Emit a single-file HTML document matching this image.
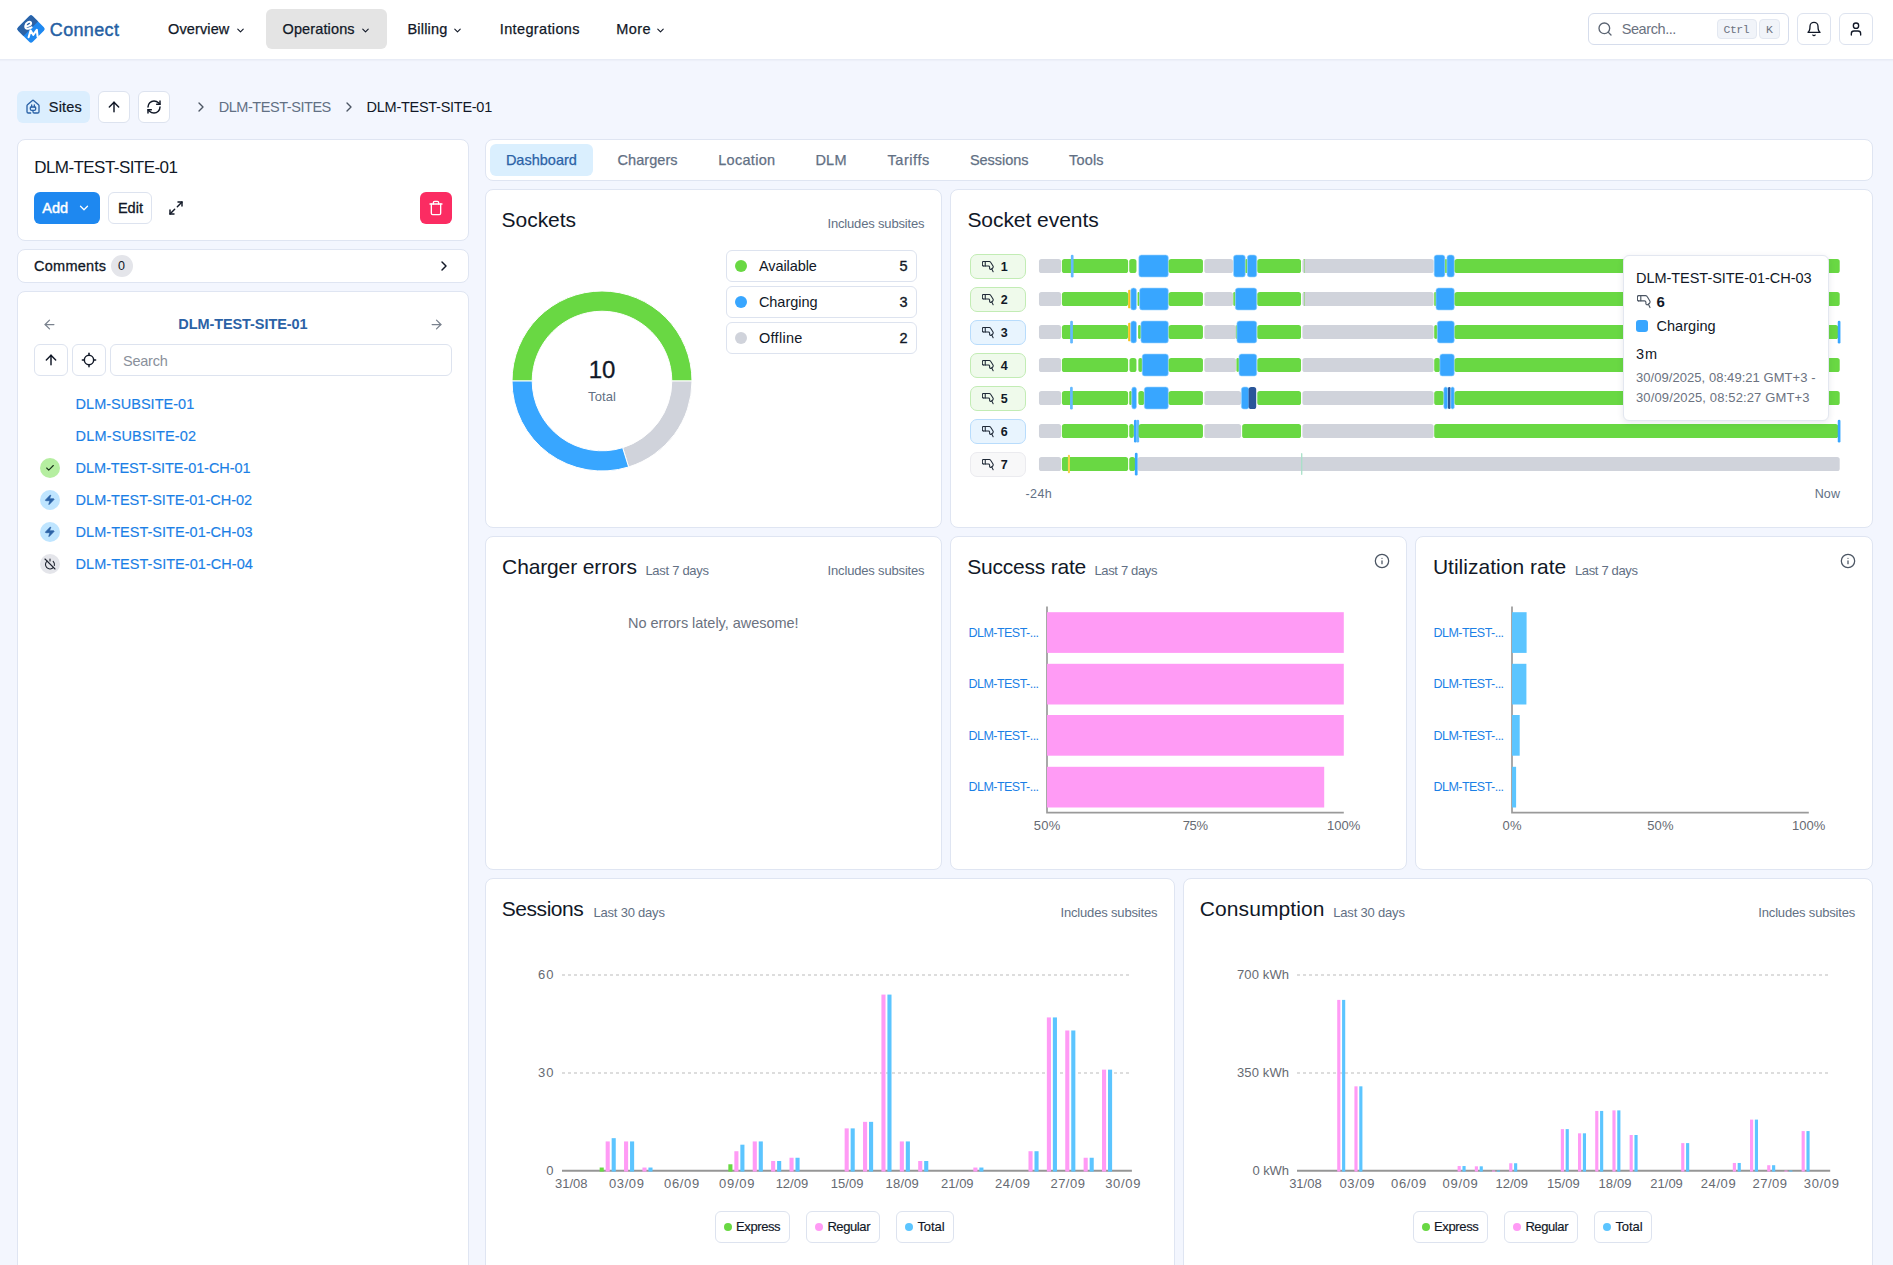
<!DOCTYPE html>
<html><head><meta charset="utf-8"><title>Connect</title><style>
html,body{margin:0;padding:0;}
body{width:1893px;height:1265px;overflow:hidden;background:#f3f6fe;position:relative;font-family:"Liberation Sans",sans-serif;}
.b{position:absolute;box-sizing:border-box;display:block;}
.t{position:absolute;white-space:nowrap;line-height:1;display:block;}
</style></head><body>
<div class="b" style="left:-10px;top:0px;width:1913px;height:59px;background:#fff;box-shadow:0 1px 2px rgba(30,40,80,.075);"></div>
<svg class="b" style="left:16px;top:14px" width="30" height="30" viewBox="0 0 30 30"><defs><clipPath id="lg"><rect x="4.6" y="4.6" width="20.8" height="20.8" rx="2.6" transform="rotate(45 15 15)"/></clipPath></defs><g clip-path="url(#lg)"><rect x="0" y="0" width="30" height="30" fill="#1e88f0"/><polygon points="-5,-5 30,-5 -5,30" fill="#2b62a6" transform="translate(2.2,2.2)"/></g><path d="M9.2 12.4C12 12.6 15.8 10.8 15 8.6C14.2 6.8 9.8 8.2 9.3 12C9 15 12.3 15.6 15.6 13.4" fill="none" stroke="#fff" stroke-width="2" stroke-linecap="round"/><path d="M12.6 23.2L14.6 16.6L17.2 20.8L20.8 15.8L21.6 22.6" fill="none" stroke="#fff" stroke-width="2.1" stroke-linecap="round" stroke-linejoin="round"/></svg>
<span class="t" style="left:49.80px;top:21px;font-size:18px;line-height:18px;color:#265fa3;letter-spacing:0.343px;-webkit-text-stroke:0.42px #265fa3;">Connect</span>
<div class="b" style="left:266px;top:9px;width:121px;height:40px;background:#e4e4e4;border-radius:6px;"></div>
<span class="t" style="left:168.00px;top:22px;font-size:14.5px;line-height:14.5px;color:#111827;letter-spacing:0.124px;-webkit-text-stroke:0.25px #111827;">Overview</span>
<svg class="b" style="left:234.60px;top:24.50px;" width="11" height="11" viewBox="0 0 24 24" fill="none" stroke="#111827" stroke-width="2.4" stroke-linecap="round" stroke-linejoin="round"><path d="m6 9 6 6 6-6"/></svg>
<span class="t" style="left:282.50px;top:22px;font-size:14.5px;line-height:14.5px;color:#111827;letter-spacing:0.130px;-webkit-text-stroke:0.25px #111827;">Operations</span>
<svg class="b" style="left:359.50px;top:24.50px;" width="11" height="11" viewBox="0 0 24 24" fill="none" stroke="#111827" stroke-width="2.4" stroke-linecap="round" stroke-linejoin="round"><path d="m6 9 6 6 6-6"/></svg>
<span class="t" style="left:407.50px;top:22px;font-size:14.5px;line-height:14.5px;color:#111827;letter-spacing:0.186px;-webkit-text-stroke:0.25px #111827;">Billing</span>
<svg class="b" style="left:452.00px;top:24.50px;" width="11" height="11" viewBox="0 0 24 24" fill="none" stroke="#111827" stroke-width="2.4" stroke-linecap="round" stroke-linejoin="round"><path d="m6 9 6 6 6-6"/></svg>
<span class="t" style="left:499.80px;top:22px;font-size:14.5px;line-height:14.5px;color:#111827;letter-spacing:0.357px;-webkit-text-stroke:0.25px #111827;">Integrations</span>
<span class="t" style="left:616.30px;top:22px;font-size:14.5px;line-height:14.5px;color:#111827;letter-spacing:0.388px;-webkit-text-stroke:0.25px #111827;">More</span>
<svg class="b" style="left:654.80px;top:24.50px;" width="11" height="11" viewBox="0 0 24 24" fill="none" stroke="#111827" stroke-width="2.4" stroke-linecap="round" stroke-linejoin="round"><path d="m6 9 6 6 6-6"/></svg>
<div class="b" style="left:1588px;top:13px;width:201px;height:32px;background:#fff;border:1px solid #d6ddec;border-radius:6px;box-sizing:border-box;"></div>
<svg class="b" style="left:1597.00px;top:21.00px;" width="16" height="16" viewBox="0 0 24 24" fill="none" stroke="#5b6472" stroke-width="2" stroke-linecap="round" stroke-linejoin="round"><circle cx="11" cy="11" r="8"/><path d="m21 21-4.3-4.3"/></svg>
<span class="t" style="left:1621.70px;top:22px;font-size:14.5px;line-height:14.5px;color:#6b7280;letter-spacing:-0.416px;">Search...</span>
<div class="b" style="left:1717px;top:19px;width:40px;height:20px;background:#f1f4f9;border:1px solid #e3e8f1;border-radius:4px;box-sizing:border-box;"></div>
<span class="t" style="left:1723.50px;top:24px;font-size:11.5px;line-height:11.5px;color:#6b7280;letter-spacing:-0.468px;font-family:Liberation Mono,monospace;">Ctrl</span>
<div class="b" style="left:1759px;top:19px;width:21px;height:20px;background:#f1f4f9;border:1px solid #e3e8f1;border-radius:4px;box-sizing:border-box;"></div>
<span class="t" style="left:1766.05px;top:24px;font-size:11.5px;line-height:11.5px;color:#6b7280;font-family:Liberation Mono,monospace;">K</span>
<div class="b" style="left:1797px;top:13px;width:33.5px;height:32px;background:#fff;border:1px solid #dde3ef;border-radius:6px;box-sizing:border-box;"></div>
<svg class="b" style="left:1805.80px;top:21.00px;" width="16" height="16" viewBox="0 0 24 24" fill="none" stroke="#111827" stroke-width="2" stroke-linecap="round" stroke-linejoin="round"><path d="M6 8a6 6 0 0 1 12 0c0 7 3 9 3 9H3s3-2 3-9"/><path d="M10.3 21a1.94 1.94 0 0 0 3.4 0"/></svg>
<div class="b" style="left:1839px;top:13px;width:33.5px;height:32px;background:#fff;border:1px solid #dde3ef;border-radius:6px;box-sizing:border-box;"></div>
<svg class="b" style="left:1847.80px;top:21.00px;" width="16" height="16" viewBox="0 0 24 24" fill="none" stroke="#111827" stroke-width="2" stroke-linecap="round" stroke-linejoin="round"><path d="M19 21v-2a4 4 0 0 0-4-4H9a4 4 0 0 0-4 4v2"/><circle cx="12" cy="7" r="4"/></svg>
<div class="b" style="left:17px;top:91px;width:73px;height:32px;background:#dbeefe;border-radius:6px;"></div>
<svg class="b" style="left:25.00px;top:98.60px;" width="16" height="16" viewBox="0 0 24 24" fill="none" stroke="#2b62a6" stroke-width="2" stroke-linecap="round" stroke-linejoin="round"><path d="M10 12V8.964"/><path d="M14 12V8.964"/><path d="M15 12a1 1 0 0 1 1 1v2a2 2 0 0 1-2 2h-4a2 2 0 0 1-2-2v-2a1 1 0 0 1 1-1z"/><path d="M8.5 21H5a2 2 0 0 1-2-2v-9a2 2 0 0 1 .709-1.528l7-5.999a2 2 0 0 1 2.582 0l7 5.999A2 2 0 0 1 21 10v9a2 2 0 0 1-2 2h-5a2 2 0 0 1-2-2v-2"/></svg>
<span class="t" style="left:48.80px;top:100px;font-size:14.5px;line-height:14.5px;color:#111827;letter-spacing:0.191px;-webkit-text-stroke:0.2px #111827;">Sites</span>
<div class="b" style="left:98px;top:91px;width:32px;height:32px;background:#fff;border:1px solid #dde3ef;border-radius:6px;box-sizing:border-box;"></div>
<svg class="b" style="left:106.00px;top:99.00px;" width="16" height="16" viewBox="0 0 24 24" fill="none" stroke="#111827" stroke-width="2.2" stroke-linecap="round" stroke-linejoin="round"><path d="m5 12 7-7 7 7"/><path d="M12 19V5"/></svg>
<div class="b" style="left:138px;top:91px;width:32px;height:32px;background:#fff;border:1px solid #dde3ef;border-radius:6px;box-sizing:border-box;"></div>
<svg class="b" style="left:146.00px;top:99.00px;" width="16" height="16" viewBox="0 0 24 24" fill="none" stroke="#111827" stroke-width="2.2" stroke-linecap="round" stroke-linejoin="round"><path d="M3 12a9 9 0 0 1 9-9 9.75 9.75 0 0 1 6.74 2.74L21 8"/><path d="M21 3v5h-5"/><path d="M21 12a9 9 0 0 1-9 9 9.75 9.75 0 0 1-6.74-2.74L3 16"/><path d="M8 16H3v5"/></svg>
<svg class="b" style="left:193.00px;top:98.80px;" width="16" height="16" viewBox="0 0 24 24" fill="none" stroke="#4b5563" stroke-width="2" stroke-linecap="round" stroke-linejoin="round"><path d="m9 18 6-6-6-6"/></svg>
<span class="t" style="left:218.70px;top:100px;font-size:14.5px;line-height:14.5px;color:#627084;letter-spacing:-0.448px;">DLM-TEST-SITES</span>
<svg class="b" style="left:340.80px;top:98.80px;" width="16" height="16" viewBox="0 0 24 24" fill="none" stroke="#4b5563" stroke-width="2" stroke-linecap="round" stroke-linejoin="round"><path d="m9 18 6-6-6-6"/></svg>
<span class="t" style="left:366.60px;top:100px;font-size:14.5px;line-height:14.5px;color:#111827;letter-spacing:-0.274px;">DLM-TEST-SITE-01</span>
<div class="b" style="left:17px;top:139px;width:452px;height:102px;background:#fff;border:1px solid #dfe5f2;border-radius:8px;box-sizing:border-box;"></div>
<span class="t" style="left:34.20px;top:159px;font-size:17px;line-height:17px;color:#111827;letter-spacing:-0.559px;">DLM-TEST-SITE-01</span>
<div class="b" style="left:34px;top:192px;width:66px;height:32px;background:#1e88f0;border-radius:6px;"></div>
<span class="t" style="left:42.20px;top:201px;font-size:14.5px;line-height:14.5px;color:#fff;letter-spacing:0.100px;-webkit-text-stroke:0.45px #fff;">Add</span>
<svg class="b" style="left:77.00px;top:201.00px;" width="14" height="14" viewBox="0 0 24 24" fill="none" stroke="#fff" stroke-width="2.2" stroke-linecap="round" stroke-linejoin="round"><path d="m6 9 6 6 6-6"/></svg>
<div class="b" style="left:108px;top:192px;width:44px;height:32px;background:#fff;border:1px solid #dde3ef;border-radius:6px;box-sizing:border-box;"></div>
<span class="t" style="left:117.90px;top:201px;font-size:14.5px;line-height:14.5px;color:#111827;letter-spacing:0.038px;-webkit-text-stroke:0.3px #111827;">Edit</span>
<svg class="b" style="left:168.00px;top:200.00px;" width="16" height="16" viewBox="0 0 24 24" fill="none" stroke="#111827" stroke-width="2.2" stroke-linecap="round" stroke-linejoin="round"><polyline points="15 3 21 3 21 9"/><polyline points="9 21 3 21 3 15"/><line x1="21" x2="14" y1="3" y2="10"/><line x1="3" x2="10" y1="21" y2="14"/></svg>
<div class="b" style="left:420px;top:192px;width:32px;height:32px;background:#fb2c62;border-radius:6px;"></div>
<svg class="b" style="left:428.00px;top:200.00px;" width="16" height="16" viewBox="0 0 24 24" fill="none" stroke="#fff" stroke-width="2" stroke-linecap="round" stroke-linejoin="round"><path d="M3 6h18"/><path d="M19 6v14c0 1-1 2-2 2H7c-1 0-2-1-2-2V6"/><path d="M8 6V4c0-1 1-2 2-2h4c1 0 2 1 2 2v2"/></svg>
<div class="b" style="left:17px;top:249px;width:452px;height:34px;background:#fff;border:1px solid #dfe5f2;border-radius:8px;box-sizing:border-box;"></div>
<span class="t" style="left:34.00px;top:259px;font-size:14.5px;line-height:14.5px;color:#111827;letter-spacing:0.271px;-webkit-text-stroke:0.3px #111827;">Comments</span>
<div class="b" style="left:110.5px;top:255px;width:22px;height:22px;background:#e4e5ea;border-radius:11px;"></div>
<span class="t" style="left:118.02px;top:260px;font-size:12.5px;line-height:12.5px;color:#111827;">0</span>
<svg class="b" style="left:436.00px;top:258.00px;" width="16" height="16" viewBox="0 0 24 24" fill="none" stroke="#111827" stroke-width="2.2" stroke-linecap="round" stroke-linejoin="round"><path d="m9 18 6-6-6-6"/></svg>
<div class="b" style="left:17px;top:291px;width:452px;height:1000px;background:#fff;border:1px solid #dfe5f2;border-radius:8px;box-sizing:border-box;"></div>
<svg class="b" style="left:42.30px;top:316.50px;" width="15" height="15" viewBox="0 0 24 24" fill="none" stroke="#7a828e" stroke-width="2" stroke-linecap="round" stroke-linejoin="round"><path d="m12 19-7-7 7-7"/><path d="M19 12H5"/></svg>
<span class="t" style="left:178.25px;top:317px;font-size:14.5px;line-height:14.5px;color:#2b62a6;font-weight:700;letter-spacing:-0.081px;">DLM-TEST-SITE-01</span>
<svg class="b" style="left:428.50px;top:316.50px;" width="15" height="15" viewBox="0 0 24 24" fill="none" stroke="#7a828e" stroke-width="2" stroke-linecap="round" stroke-linejoin="round"><path d="M5 12h14"/><path d="m12 5 7 7-7 7"/></svg>
<div class="b" style="left:34px;top:344px;width:34px;height:32px;background:#fff;border:1px solid #dde3ef;border-radius:6px;box-sizing:border-box;"></div>
<svg class="b" style="left:43.00px;top:352.00px;" width="16" height="16" viewBox="0 0 24 24" fill="none" stroke="#111827" stroke-width="2.2" stroke-linecap="round" stroke-linejoin="round"><path d="m5 12 7-7 7 7"/><path d="M12 19V5"/></svg>
<div class="b" style="left:72px;top:344px;width:34px;height:32px;background:#fff;border:1px solid #dde3ef;border-radius:6px;box-sizing:border-box;"></div>
<svg class="b" style="left:81.00px;top:352.00px;" width="16" height="16" viewBox="0 0 24 24" fill="none" stroke="#111827" stroke-width="2.2" stroke-linecap="round" stroke-linejoin="round"><line x1="2" x2="5" y1="12" y2="12"/><line x1="19" x2="22" y1="12" y2="12"/><line x1="12" x2="12" y1="2" y2="5"/><line x1="12" x2="12" y1="19" y2="22"/><circle cx="12" cy="12" r="7"/></svg>
<div class="b" style="left:110px;top:344px;width:342px;height:32px;background:#fff;border:1px solid #dde3ef;border-radius:6px;box-sizing:border-box;"></div>
<span class="t" style="left:123.00px;top:354px;font-size:14.5px;line-height:14.5px;color:#8a909b;letter-spacing:-0.229px;">Search</span>
<span class="t" style="left:75.60px;top:397px;font-size:14.5px;line-height:14.5px;color:#1b7fe6;letter-spacing:0.012px;-webkit-text-stroke:0.15px #1b7fe6;">DLM-SUBSITE-01</span>
<span class="t" style="left:75.60px;top:429px;font-size:14.5px;line-height:14.5px;color:#1b7fe6;letter-spacing:0.150px;-webkit-text-stroke:0.15px #1b7fe6;">DLM-SUBSITE-02</span>
<span class="t" style="left:75.60px;top:461px;font-size:14.5px;line-height:14.5px;color:#1b7fe6;letter-spacing:-0.074px;-webkit-text-stroke:0.15px #1b7fe6;">DLM-TEST-SITE-01-CH-01</span>
<div class="b" style="left:40px;top:458px;width:20px;height:20px;background:#b5eea0;border-radius:10px;"></div>
<svg class="b" style="left:45.00px;top:463.30px;" width="10" height="10" viewBox="0 0 24 24" fill="none" stroke="#17301a" stroke-width="2.6" stroke-linecap="round" stroke-linejoin="round"><path d="M20 6 9 17l-5-5"/></svg>
<span class="t" style="left:75.60px;top:493px;font-size:14.5px;line-height:14.5px;color:#1b7fe6;letter-spacing:0.007px;-webkit-text-stroke:0.15px #1b7fe6;">DLM-TEST-SITE-01-CH-02</span>
<div class="b" style="left:40px;top:490px;width:20px;height:20px;background:#bfe5ff;border-radius:10px;"></div>
<svg class="b" style="left:44.25px;top:494.25px;" width="11.5" height="11.5" viewBox="0 0 24 24" fill="#2b62a6" stroke="#2b62a6" stroke-width="1.5" stroke-linecap="round" stroke-linejoin="round"><path d="M4 14a1 1 0 0 1-.78-1.63l9.9-10.2a.5.5 0 0 1 .86.46l-1.92 6.02A1 1 0 0 0 13 10h7a1 1 0 0 1 .78 1.63l-9.9 10.2a.5.5 0 0 1-.86-.46l1.92-6.02A1 1 0 0 0 11 14z"/></svg>
<span class="t" style="left:75.60px;top:525px;font-size:14.5px;line-height:14.5px;color:#1b7fe6;letter-spacing:0.026px;-webkit-text-stroke:0.15px #1b7fe6;">DLM-TEST-SITE-01-CH-03</span>
<div class="b" style="left:40px;top:522px;width:20px;height:20px;background:#bfe5ff;border-radius:10px;"></div>
<svg class="b" style="left:44.25px;top:526.25px;" width="11.5" height="11.5" viewBox="0 0 24 24" fill="#2b62a6" stroke="#2b62a6" stroke-width="1.5" stroke-linecap="round" stroke-linejoin="round"><path d="M4 14a1 1 0 0 1-.78-1.63l9.9-10.2a.5.5 0 0 1 .86.46l-1.92 6.02A1 1 0 0 0 13 10h7a1 1 0 0 1 .78 1.63l-9.9 10.2a.5.5 0 0 1-.86-.46l1.92-6.02A1 1 0 0 0 11 14z"/></svg>
<span class="t" style="left:75.60px;top:557px;font-size:14.5px;line-height:14.5px;color:#1b7fe6;letter-spacing:0.036px;-webkit-text-stroke:0.15px #1b7fe6;">DLM-TEST-SITE-01-CH-04</span>
<div class="b" style="left:40px;top:554px;width:20px;height:20px;background:#e4e5ea;border-radius:10px;"></div>
<svg class="b" style="left:44.00px;top:558.00px;" width="12" height="12" viewBox="0 0 24 24" fill="none" stroke="#1f2430" stroke-width="2.2" stroke-linecap="round" stroke-linejoin="round"><path d="M18.36 6.64A9 9 0 0 1 20.77 15"/><path d="M6.16 6.16a9 9 0 1 0 12.68 12.68"/><path d="M12 2v4"/><path d="m2 2 20 20"/></svg>
<div class="b" style="left:485px;top:139px;width:1388px;height:42px;background:#fff;border:1px solid #dfe5f2;border-radius:8px;"></div>
<div class="b" style="left:490px;top:144px;width:103px;height:32px;background:#daeffe;border-radius:6px;"></div>
<span class="t" style="left:505.90px;top:153px;font-size:14.5px;line-height:14.5px;color:#2b62a6;letter-spacing:0.008px;-webkit-text-stroke:0.25px #2b62a6;">Dashboard</span>
<span class="t" style="left:617.60px;top:153px;font-size:14.5px;line-height:14.5px;color:#627084;letter-spacing:0.038px;-webkit-text-stroke:0.25px #627084;">Chargers</span>
<span class="t" style="left:718.20px;top:153px;font-size:14.5px;line-height:14.5px;color:#627084;letter-spacing:0.297px;-webkit-text-stroke:0.25px #627084;">Location</span>
<span class="t" style="left:815.40px;top:153px;font-size:14.5px;line-height:14.5px;color:#627084;letter-spacing:0.243px;-webkit-text-stroke:0.25px #627084;">DLM</span>
<span class="t" style="left:887.50px;top:153px;font-size:14.5px;line-height:14.5px;color:#627084;letter-spacing:0.565px;-webkit-text-stroke:0.25px #627084;">Tariffs</span>
<span class="t" style="left:970.00px;top:153px;font-size:14.5px;line-height:14.5px;color:#627084;letter-spacing:-0.062px;-webkit-text-stroke:0.25px #627084;">Sessions</span>
<span class="t" style="left:1069.10px;top:153px;font-size:14.5px;line-height:14.5px;color:#627084;letter-spacing:0.137px;-webkit-text-stroke:0.25px #627084;">Tools</span>
<div class="b" style="left:485px;top:189px;width:457px;height:339px;background:#fff;border:1px solid #dfe5f2;border-radius:8px;"></div>
<span class="t" style="left:501.50px;top:209px;font-size:21px;line-height:21px;color:#111827;letter-spacing:-0.017px;">Sockets</span>
<span class="t" style="left:827.50px;top:217px;font-size:13px;line-height:13px;color:#627084;letter-spacing:-0.170px;">Includes subsites</span>
<svg class="b" style="left:500px;top:280px;" width="204" height="204" viewBox="500 280 204 204"><path d="M512.00 381.00A90 90 0 0 1 692.00 381.00L671.80 381.00A69.8 69.8 0 0 0 532.20 381.00Z" fill="#69d843" stroke="#fff" stroke-width="1"/><path d="M692.00 381.00A90 90 0 0 1 628.61 466.98L622.64 447.68A69.8 69.8 0 0 0 671.80 381.00Z" fill="#d0d3db" stroke="#fff" stroke-width="1"/><path d="M628.61 466.98A90 90 0 0 1 512.00 381.00L532.20 381.00A69.8 69.8 0 0 0 622.64 447.68Z" fill="#38a6ff" stroke="#fff" stroke-width="1"/></svg>
<span class="t" style="left:588.70px;top:358px;font-size:24px;line-height:24px;color:#111827;letter-spacing:-0.096px;-webkit-text-stroke:0.3px #111827;">10</span>
<span class="t" style="left:588.05px;top:390px;font-size:13px;line-height:13px;color:#627084;letter-spacing:0.110px;">Total</span>
<div class="b" style="left:726px;top:250px;width:191px;height:32px;background:#fff;border:1px solid #dde3ef;border-radius:6px;"></div>
<div class="b" style="left:735px;top:260px;width:12px;height:12px;background:#69d843;border-radius:6px;"></div>
<span class="t" style="left:758.90px;top:259px;font-size:14.5px;line-height:14.5px;color:#111827;letter-spacing:-0.073px;">Available</span>
<span class="t" style="left:899.54px;top:259px;font-size:14.5px;line-height:14.5px;color:#111827;-webkit-text-stroke:0.35px #111827;">5</span>
<div class="b" style="left:726px;top:286px;width:191px;height:32px;background:#fff;border:1px solid #dde3ef;border-radius:6px;"></div>
<div class="b" style="left:735px;top:296px;width:12px;height:12px;background:#38a6ff;border-radius:6px;"></div>
<span class="t" style="left:758.90px;top:295px;font-size:14.5px;line-height:14.5px;color:#111827;letter-spacing:-0.035px;">Charging</span>
<span class="t" style="left:899.54px;top:295px;font-size:14.5px;line-height:14.5px;color:#111827;-webkit-text-stroke:0.35px #111827;">3</span>
<div class="b" style="left:726px;top:322px;width:191px;height:32px;background:#fff;border:1px solid #dde3ef;border-radius:6px;"></div>
<div class="b" style="left:735px;top:332px;width:12px;height:12px;background:#d0d3db;border-radius:6px;"></div>
<span class="t" style="left:758.90px;top:331px;font-size:14.5px;line-height:14.5px;color:#111827;letter-spacing:0.309px;">Offline</span>
<span class="t" style="left:899.54px;top:331px;font-size:14.5px;line-height:14.5px;color:#111827;-webkit-text-stroke:0.35px #111827;">2</span>
<div class="b" style="left:950px;top:189px;width:923px;height:339px;background:#fff;border:1px solid #dfe5f2;border-radius:8px;"></div>
<span class="t" style="left:967.40px;top:209px;font-size:21px;line-height:21px;color:#111827;letter-spacing:-0.051px;">Socket events</span>
<div class="b" style="left:970px;top:254px;width:56px;height:25px;background:#effaeb;border:1px solid #c2ecb4;border-radius:7px;"></div>
<svg class="b" style="left:981.50px;top:260.70px;" width="12" height="12" viewBox="0 0 14 14" fill="none" stroke="#1f2937" stroke-width="1.25" stroke-linecap="round" stroke-linejoin="round"><path d="M1.6 0.6H8.6Q9.8 0.7 10.3 1.8L13 6.2Q13.3 7.2 12.6 8.2L11.4 9.2"/><path d="M1.6 5.9H7.3Q8.7 5.8 8.9 7.1V8.8Q9.2 9.8 10.3 9.8L11.4 9.2L13 12.6"/><path d="M1.6 0.6Q0.4 0.8 0.4 2V4.5Q0.4 5.8 1.6 5.9"/><path d="M3.8 0.8V5.7"/></svg>
<span class="t" style="left:1000.82px;top:261px;font-size:12.5px;line-height:12.5px;color:#111827;font-weight:700;">1</span>
<div class="b" style="left:970px;top:287px;width:56px;height:25px;background:#effaeb;border:1px solid #c2ecb4;border-radius:7px;"></div>
<svg class="b" style="left:981.50px;top:293.70px;" width="12" height="12" viewBox="0 0 14 14" fill="none" stroke="#1f2937" stroke-width="1.25" stroke-linecap="round" stroke-linejoin="round"><path d="M1.6 0.6H8.6Q9.8 0.7 10.3 1.8L13 6.2Q13.3 7.2 12.6 8.2L11.4 9.2"/><path d="M1.6 5.9H7.3Q8.7 5.8 8.9 7.1V8.8Q9.2 9.8 10.3 9.8L11.4 9.2L13 12.6"/><path d="M1.6 0.6Q0.4 0.8 0.4 2V4.5Q0.4 5.8 1.6 5.9"/><path d="M3.8 0.8V5.7"/></svg>
<span class="t" style="left:1000.82px;top:294px;font-size:12.5px;line-height:12.5px;color:#111827;font-weight:700;">2</span>
<div class="b" style="left:970px;top:320px;width:56px;height:25px;background:#e8f4fe;border:1px solid #b8dcfc;border-radius:7px;"></div>
<svg class="b" style="left:981.50px;top:326.70px;" width="12" height="12" viewBox="0 0 14 14" fill="none" stroke="#1f2937" stroke-width="1.25" stroke-linecap="round" stroke-linejoin="round"><path d="M1.6 0.6H8.6Q9.8 0.7 10.3 1.8L13 6.2Q13.3 7.2 12.6 8.2L11.4 9.2"/><path d="M1.6 5.9H7.3Q8.7 5.8 8.9 7.1V8.8Q9.2 9.8 10.3 9.8L11.4 9.2L13 12.6"/><path d="M1.6 0.6Q0.4 0.8 0.4 2V4.5Q0.4 5.8 1.6 5.9"/><path d="M3.8 0.8V5.7"/></svg>
<span class="t" style="left:1000.82px;top:327px;font-size:12.5px;line-height:12.5px;color:#111827;font-weight:700;">3</span>
<div class="b" style="left:970px;top:353px;width:56px;height:25px;background:#effaeb;border:1px solid #c2ecb4;border-radius:7px;"></div>
<svg class="b" style="left:981.50px;top:359.70px;" width="12" height="12" viewBox="0 0 14 14" fill="none" stroke="#1f2937" stroke-width="1.25" stroke-linecap="round" stroke-linejoin="round"><path d="M1.6 0.6H8.6Q9.8 0.7 10.3 1.8L13 6.2Q13.3 7.2 12.6 8.2L11.4 9.2"/><path d="M1.6 5.9H7.3Q8.7 5.8 8.9 7.1V8.8Q9.2 9.8 10.3 9.8L11.4 9.2L13 12.6"/><path d="M1.6 0.6Q0.4 0.8 0.4 2V4.5Q0.4 5.8 1.6 5.9"/><path d="M3.8 0.8V5.7"/></svg>
<span class="t" style="left:1000.82px;top:360px;font-size:12.5px;line-height:12.5px;color:#111827;font-weight:700;">4</span>
<div class="b" style="left:970px;top:386px;width:56px;height:25px;background:#effaeb;border:1px solid #c2ecb4;border-radius:7px;"></div>
<svg class="b" style="left:981.50px;top:392.70px;" width="12" height="12" viewBox="0 0 14 14" fill="none" stroke="#1f2937" stroke-width="1.25" stroke-linecap="round" stroke-linejoin="round"><path d="M1.6 0.6H8.6Q9.8 0.7 10.3 1.8L13 6.2Q13.3 7.2 12.6 8.2L11.4 9.2"/><path d="M1.6 5.9H7.3Q8.7 5.8 8.9 7.1V8.8Q9.2 9.8 10.3 9.8L11.4 9.2L13 12.6"/><path d="M1.6 0.6Q0.4 0.8 0.4 2V4.5Q0.4 5.8 1.6 5.9"/><path d="M3.8 0.8V5.7"/></svg>
<span class="t" style="left:1000.82px;top:393px;font-size:12.5px;line-height:12.5px;color:#111827;font-weight:700;">5</span>
<div class="b" style="left:970px;top:419px;width:56px;height:25px;background:#e8f4fe;border:1px solid #b8dcfc;border-radius:7px;"></div>
<svg class="b" style="left:981.50px;top:425.70px;" width="12" height="12" viewBox="0 0 14 14" fill="none" stroke="#1f2937" stroke-width="1.25" stroke-linecap="round" stroke-linejoin="round"><path d="M1.6 0.6H8.6Q9.8 0.7 10.3 1.8L13 6.2Q13.3 7.2 12.6 8.2L11.4 9.2"/><path d="M1.6 5.9H7.3Q8.7 5.8 8.9 7.1V8.8Q9.2 9.8 10.3 9.8L11.4 9.2L13 12.6"/><path d="M1.6 0.6Q0.4 0.8 0.4 2V4.5Q0.4 5.8 1.6 5.9"/><path d="M3.8 0.8V5.7"/></svg>
<span class="t" style="left:1000.82px;top:426px;font-size:12.5px;line-height:12.5px;color:#111827;font-weight:700;">6</span>
<div class="b" style="left:970px;top:452px;width:56px;height:25px;background:#f8f8f9;border:1px solid #ebebef;border-radius:7px;"></div>
<svg class="b" style="left:981.50px;top:458.70px;" width="12" height="12" viewBox="0 0 14 14" fill="none" stroke="#1f2937" stroke-width="1.25" stroke-linecap="round" stroke-linejoin="round"><path d="M1.6 0.6H8.6Q9.8 0.7 10.3 1.8L13 6.2Q13.3 7.2 12.6 8.2L11.4 9.2"/><path d="M1.6 5.9H7.3Q8.7 5.8 8.9 7.1V8.8Q9.2 9.8 10.3 9.8L11.4 9.2L13 12.6"/><path d="M1.6 0.6Q0.4 0.8 0.4 2V4.5Q0.4 5.8 1.6 5.9"/><path d="M3.8 0.8V5.7"/></svg>
<span class="t" style="left:1000.82px;top:459px;font-size:12.5px;line-height:12.5px;color:#111827;font-weight:700;">7</span>
<svg class="b" style="left:1030px;top:250px;" width="820" height="230" viewBox="1030 250 820 230"><rect x="1038.98" y="259.00" width="22.09" height="14" rx="2.60" fill="#d0d3db"/><rect x="1061.93" y="259.00" width="66.17" height="14" rx="2.60" fill="#69d843"/><rect x="1070.85" y="254.70" width="2.70" height="22.8" rx="1.35" fill="#62b8ff"/><rect x="1129.23" y="259.00" width="7.22" height="14" rx="2.60" fill="#69d843"/><rect x="1138.84" y="255.00" width="29.47" height="22" rx="2.60" fill="#38a6ff" stroke="#9ad5ff" stroke-width="0.6"/><rect x="1168.61" y="259.00" width="34.35" height="14" rx="2.60" fill="#69d843"/><rect x="1204.34" y="259.00" width="28.61" height="14" rx="2.60" fill="#d0d3db"/><rect x="1233.52" y="255.00" width="11.74" height="22" rx="2.60" fill="#38a6ff" stroke="#9ad5ff" stroke-width="0.6"/><rect x="1245.55" y="259.00" width="1.75" height="14" rx="0.87" fill="#69d843"/><rect x="1247.34" y="255.00" width="9.39" height="22" rx="2.60" fill="#38a6ff" stroke="#9ad5ff" stroke-width="0.6"/><rect x="1257.29" y="259.00" width="43.74" height="14" rx="2.60" fill="#69d843"/><rect x="1302.41" y="259.00" width="131.19" height="14" rx="2.60" fill="#d0d3db"/><rect x="1303.98" y="259.00" width="0.44" height="14" rx="0.22" fill="#69d843"/><rect x="1434.17" y="255.00" width="10.69" height="22" rx="2.60" fill="#38a6ff" stroke="#9ad5ff" stroke-width="0.6"/><rect x="1445.16" y="259.00" width="1.75" height="14" rx="0.87" fill="#69d843"/><rect x="1446.95" y="255.00" width="7.30" height="22" rx="2.60" fill="#38a6ff" stroke="#9ad5ff" stroke-width="0.6"/><rect x="1454.55" y="259.00" width="385.16" height="14" rx="2.60" fill="#69d843"/><rect x="1038.98" y="292.00" width="22.09" height="14" rx="2.60" fill="#d0d3db"/><rect x="1061.93" y="292.00" width="66.17" height="14" rx="2.60" fill="#69d843"/><rect x="1128.14" y="289.70" width="2.35" height="18.6" rx="1.17" fill="#f6c21c"/><rect x="1130.75" y="288.00" width="5.74" height="22" rx="2.60" fill="#38a6ff" stroke="#9ad5ff" stroke-width="0.6"/><rect x="1137.57" y="292.00" width="2.01" height="14" rx="1.00" fill="#69d843"/><rect x="1139.62" y="288.00" width="28.69" height="22" rx="2.60" fill="#38a6ff" stroke="#9ad5ff" stroke-width="0.6"/><rect x="1168.61" y="292.00" width="34.35" height="14" rx="2.60" fill="#69d843"/><rect x="1204.34" y="292.00" width="28.61" height="14" rx="2.60" fill="#d0d3db"/><rect x="1233.29" y="292.00" width="2.27" height="14" rx="1.13" fill="#69d843"/><rect x="1235.34" y="288.00" width="21.39" height="22" rx="2.60" fill="#38a6ff" stroke="#9ad5ff" stroke-width="0.6"/><rect x="1257.29" y="292.00" width="43.74" height="14" rx="2.60" fill="#69d843"/><rect x="1302.41" y="292.00" width="131.19" height="14" rx="2.60" fill="#d0d3db"/><rect x="1303.98" y="292.00" width="0.44" height="14" rx="0.22" fill="#69d843"/><rect x="1434.21" y="292.00" width="2.01" height="14" rx="1.00" fill="#69d843"/><rect x="1435.99" y="288.00" width="18.26" height="22" rx="2.60" fill="#38a6ff" stroke="#9ad5ff" stroke-width="0.6"/><rect x="1454.55" y="292.00" width="385.16" height="14" rx="2.60" fill="#69d843"/><rect x="1038.98" y="325.00" width="22.09" height="14" rx="2.60" fill="#d0d3db"/><rect x="1061.93" y="325.00" width="66.17" height="14" rx="2.60" fill="#69d843"/><rect x="1070.19" y="320.70" width="2.70" height="22.8" rx="1.35" fill="#62b8ff"/><rect x="1128.14" y="322.70" width="2.35" height="18.6" rx="1.17" fill="#f6c21c"/><rect x="1130.75" y="321.00" width="5.74" height="22" rx="2.60" fill="#38a6ff" stroke="#9ad5ff" stroke-width="0.6"/><rect x="1138.09" y="325.00" width="2.79" height="14" rx="1.40" fill="#69d843"/><rect x="1140.92" y="321.00" width="27.39" height="22" rx="2.60" fill="#38a6ff" stroke="#9ad5ff" stroke-width="0.6"/><rect x="1168.61" y="325.00" width="34.35" height="14" rx="2.60" fill="#69d843"/><rect x="1204.34" y="325.00" width="31.74" height="14" rx="2.60" fill="#d0d3db"/><rect x="1235.90" y="325.00" width="0.96" height="14" rx="0.48" fill="#69d843"/><rect x="1236.91" y="321.00" width="19.82" height="22" rx="2.60" fill="#38a6ff" stroke="#9ad5ff" stroke-width="0.6"/><rect x="1257.29" y="325.00" width="43.74" height="14" rx="2.60" fill="#69d843"/><rect x="1302.41" y="325.00" width="131.19" height="14" rx="2.60" fill="#d0d3db"/><rect x="1434.21" y="325.00" width="3.31" height="14" rx="1.66" fill="#69d843"/><rect x="1437.30" y="321.00" width="16.95" height="22" rx="2.60" fill="#38a6ff" stroke="#9ad5ff" stroke-width="0.6"/><rect x="1454.55" y="325.00" width="383.59" height="14" rx="2.60" fill="#69d843"/><rect x="1837.75" y="320.70" width="2.70" height="22.8" rx="1.35" fill="#38a6ff"/><rect x="1038.98" y="358.00" width="22.09" height="14" rx="2.60" fill="#d0d3db"/><rect x="1061.93" y="358.00" width="66.17" height="14" rx="2.60" fill="#69d843"/><rect x="1129.49" y="358.00" width="6.96" height="14" rx="2.60" fill="#69d843"/><rect x="1138.35" y="358.00" width="4.09" height="14" rx="2.05" fill="#69d843"/><rect x="1142.23" y="354.00" width="26.08" height="22" rx="2.60" fill="#38a6ff" stroke="#9ad5ff" stroke-width="0.6"/><rect x="1168.61" y="358.00" width="34.35" height="14" rx="2.60" fill="#69d843"/><rect x="1204.34" y="358.00" width="31.74" height="14" rx="2.60" fill="#d0d3db"/><rect x="1236.42" y="358.00" width="2.79" height="14" rx="1.40" fill="#69d843"/><rect x="1238.99" y="354.00" width="17.74" height="22" rx="2.60" fill="#38a6ff" stroke="#9ad5ff" stroke-width="0.6"/><rect x="1257.29" y="358.00" width="43.74" height="14" rx="2.60" fill="#69d843"/><rect x="1302.41" y="358.00" width="131.19" height="14" rx="2.60" fill="#d0d3db"/><rect x="1434.21" y="358.00" width="5.92" height="14" rx="2.60" fill="#69d843"/><rect x="1439.91" y="354.00" width="14.35" height="22" rx="2.60" fill="#38a6ff" stroke="#9ad5ff" stroke-width="0.6"/><rect x="1454.55" y="358.00" width="385.16" height="14" rx="2.60" fill="#69d843"/><rect x="1038.98" y="391.00" width="22.09" height="14" rx="2.60" fill="#d0d3db"/><rect x="1061.93" y="391.00" width="66.17" height="14" rx="2.60" fill="#69d843"/><rect x="1070.06" y="386.70" width="2.70" height="22.8" rx="1.35" fill="#62b8ff"/><rect x="1129.23" y="391.00" width="2.53" height="14" rx="1.26" fill="#69d843"/><rect x="1131.79" y="387.00" width="4.69" height="22" rx="2.35" fill="#38a6ff" stroke="#9ad5ff" stroke-width="0.6"/><rect x="1138.35" y="391.00" width="5.92" height="14" rx="2.60" fill="#69d843"/><rect x="1144.31" y="387.00" width="24.00" height="22" rx="2.60" fill="#38a6ff" stroke="#9ad5ff" stroke-width="0.6"/><rect x="1168.61" y="391.00" width="34.35" height="14" rx="2.60" fill="#69d843"/><rect x="1204.34" y="391.00" width="36.70" height="14" rx="2.60" fill="#d0d3db"/><rect x="1241.34" y="387.00" width="7.56" height="22" rx="2.60" fill="#38a6ff" stroke="#9ad5ff" stroke-width="0.6"/><rect x="1248.64" y="387.00" width="7.56" height="22" rx="2.60" fill="#2a5699"/><rect x="1257.29" y="391.00" width="43.74" height="14" rx="2.60" fill="#69d843"/><rect x="1302.41" y="391.00" width="131.19" height="14" rx="2.60" fill="#d0d3db"/><rect x="1434.21" y="391.00" width="9.57" height="14" rx="2.60" fill="#69d843"/><rect x="1443.82" y="387.00" width="3.91" height="22" rx="1.96" fill="#38a6ff" stroke="#9ad5ff" stroke-width="0.6"/><rect x="1447.99" y="387.00" width="2.61" height="22" rx="1.30" fill="#2a5699"/><rect x="1450.86" y="387.00" width="3.39" height="22" rx="1.70" fill="#38a6ff" stroke="#9ad5ff" stroke-width="0.6"/><rect x="1454.55" y="391.00" width="385.16" height="14" rx="2.60" fill="#69d843"/><rect x="1038.98" y="424.00" width="22.09" height="14" rx="2.60" fill="#d0d3db"/><rect x="1061.93" y="424.00" width="66.17" height="14" rx="2.60" fill="#69d843"/><rect x="1129.23" y="424.00" width="4.62" height="14" rx="2.31" fill="#69d843"/><rect x="1133.97" y="419.70" width="2.70" height="22.8" rx="1.35" fill="#38a6ff"/><rect x="1136.44" y="419.70" width="2.70" height="22.8" rx="1.35" fill="#62b8ff"/><rect x="1138.62" y="424.00" width="64.35" height="14" rx="2.60" fill="#69d843"/><rect x="1204.34" y="424.00" width="36.70" height="14" rx="2.60" fill="#d0d3db"/><rect x="1242.16" y="424.00" width="58.87" height="14" rx="2.60" fill="#69d843"/><rect x="1302.41" y="424.00" width="131.19" height="14" rx="2.60" fill="#d0d3db"/><rect x="1434.21" y="424.00" width="403.94" height="14" rx="2.60" fill="#69d843"/><rect x="1837.75" y="419.70" width="2.70" height="22.8" rx="1.35" fill="#38a6ff"/><rect x="1038.98" y="457.00" width="22.09" height="14" rx="2.60" fill="#d0d3db"/><rect x="1061.93" y="457.00" width="66.17" height="14" rx="2.60" fill="#69d843"/><rect x="1067.89" y="454.70" width="2.09" height="18.6" rx="1.04" fill="#f5d34a"/><rect x="1129.23" y="457.00" width="5.92" height="14" rx="2.60" fill="#69d843"/><rect x="1137.57" y="457.00" width="702.14" height="14" rx="2.60" fill="#d0d3db"/><rect x="1134.88" y="452.70" width="2.70" height="22.8" rx="1.35" fill="#38a6ff"/><rect x="1301.07" y="453.00" width="1.30" height="22" rx="0.65" fill="#a8e0c8"/></svg>
<span class="t" style="left:1025.60px;top:488px;font-size:12.5px;line-height:12.5px;color:#627084;letter-spacing:0.360px;">-24h</span>
<span class="t" style="left:1814.70px;top:488px;font-size:12.5px;line-height:12.5px;color:#627084;letter-spacing:0.147px;">Now</span>
<div class="b" style="left:1623px;top:255px;width:206px;height:166px;background:#fff;border:1px solid #e3e7f0;border-radius:6px;box-shadow:0 2px 6px rgba(30,40,80,.10);"></div>
<span class="t" style="left:1636.00px;top:271px;font-size:14.5px;line-height:14.5px;color:#111827;letter-spacing:-0.040px;">DLM-TEST-SITE-01-CH-03</span>
<svg class="b" style="left:1637.30px;top:295.40px;" width="14" height="14" viewBox="0 0 14 14" fill="none" stroke="#4b5563" stroke-width="1.15" stroke-linecap="round" stroke-linejoin="round"><path d="M1.6 0.6H8.6Q9.8 0.7 10.3 1.8L13 6.2Q13.3 7.2 12.6 8.2L11.4 9.2"/><path d="M1.6 5.9H7.3Q8.7 5.8 8.9 7.1V8.8Q9.2 9.8 10.3 9.8L11.4 9.2L13 12.6"/><path d="M1.6 0.6Q0.4 0.8 0.4 2V4.5Q0.4 5.8 1.6 5.9"/><path d="M3.8 0.8V5.7"/></svg>
<span class="t" style="left:1656.50px;top:294px;font-size:15px;line-height:15px;color:#111827;font-weight:700;">6</span>
<div class="b" style="left:1636px;top:320px;width:12px;height:12px;background:#38a6ff;border-radius:3px;"></div>
<span class="t" style="left:1656.40px;top:319px;font-size:14.5px;line-height:14.5px;color:#111827;letter-spacing:0.051px;">Charging</span>
<span class="t" style="left:1636.00px;top:347px;font-size:14.5px;line-height:14.5px;color:#111827;letter-spacing:0.857px;">3m</span>
<span class="t" style="left:1636.00px;top:371px;font-size:13px;line-height:13px;color:#6b7280;letter-spacing:0.050px;">30/09/2025, 08:49:21 GMT+3 -</span>
<span class="t" style="left:1636.00px;top:391px;font-size:13px;line-height:13px;color:#6b7280;letter-spacing:0.128px;">30/09/2025, 08:52:27 GMT+3</span>
<div class="b" style="left:485px;top:536px;width:457px;height:334px;background:#fff;border:1px solid #dfe5f2;border-radius:8px;"></div>
<span class="t" style="left:502.10px;top:556px;font-size:21px;line-height:21px;color:#111827;letter-spacing:-0.134px;">Charger errors</span>
<span class="t" style="left:645.40px;top:564px;font-size:13px;line-height:13px;color:#627084;letter-spacing:-0.289px;">Last 7 days</span>
<span class="t" style="left:827.60px;top:564px;font-size:13px;line-height:13px;color:#627084;letter-spacing:-0.170px;">Includes subsites</span>
<span class="t" style="left:627.95px;top:616px;font-size:14.5px;line-height:14.5px;color:#6b7280;letter-spacing:-0.027px;">No errors lately, awesome!</span>
<div class="b" style="left:950px;top:536px;width:457px;height:334px;background:#fff;border:1px solid #dfe5f2;border-radius:8px;"></div>
<span class="t" style="left:967.30px;top:556px;font-size:21px;line-height:21px;color:#111827;letter-spacing:-0.217px;">Success rate</span>
<span class="t" style="left:1094.40px;top:564px;font-size:13px;line-height:13px;color:#627084;letter-spacing:-0.339px;">Last 7 days</span>
<svg class="b" style="left:1374.10px;top:553.00px;" width="16" height="16" viewBox="0 0 24 24" fill="none" stroke="#4b5563" stroke-width="1.9" stroke-linecap="round" stroke-linejoin="round"><circle cx="12" cy="12" r="10"/><path d="M12 16v-4"/><path d="M12 8h.01"/></svg>
<svg class="b" style="left:1042.1px;top:600px;" width="308.8000000000002" height="220" viewBox="1042.1 600 308.8000000000002 220"><path d="M1047.10 606.6V812.7H1343.90" fill="none" stroke="#9a9a9a" stroke-width="1.7"/><rect x="1047.10" y="612.2" width="296.80" height="40.7" fill="#ff9bf5"/><rect x="1047.10" y="663.8" width="296.80" height="40.7" fill="#ff9bf5"/><rect x="1047.10" y="715.0" width="296.80" height="40.7" fill="#ff9bf5"/><rect x="1047.10" y="766.8" width="277.20" height="40.7" fill="#ff9bf5"/></svg>
<span class="t" style="left:968.50px;top:627px;font-size:12.5px;line-height:12.5px;color:#1b7fe6;letter-spacing:-0.527px;">DLM-TEST-...</span>
<span class="t" style="left:968.50px;top:678px;font-size:12.5px;line-height:12.5px;color:#1b7fe6;letter-spacing:-0.527px;">DLM-TEST-...</span>
<span class="t" style="left:968.50px;top:730px;font-size:12.5px;line-height:12.5px;color:#1b7fe6;letter-spacing:-0.527px;">DLM-TEST-...</span>
<span class="t" style="left:968.50px;top:781px;font-size:12.5px;line-height:12.5px;color:#1b7fe6;letter-spacing:-0.527px;">DLM-TEST-...</span>
<span class="t" style="left:1033.75px;top:819px;font-size:13px;line-height:13px;color:#666a72;letter-spacing:0.240px;">50%</span>
<span class="t" style="left:1182.65px;top:819px;font-size:13px;line-height:13px;color:#666a72;letter-spacing:-0.260px;">75%</span>
<span class="t" style="left:1327.10px;top:819px;font-size:13px;line-height:13px;color:#666a72;letter-spacing:-0.016px;">100%</span>
<div class="b" style="left:1415px;top:536px;width:458px;height:334px;background:#fff;border:1px solid #dfe5f2;border-radius:8px;"></div>
<span class="t" style="left:1432.90px;top:556px;font-size:21px;line-height:21px;color:#111827;letter-spacing:0.016px;">Utilization rate</span>
<span class="t" style="left:1574.90px;top:564px;font-size:13px;line-height:13px;color:#627084;letter-spacing:-0.339px;">Last 7 days</span>
<svg class="b" style="left:1839.90px;top:553.00px;" width="16" height="16" viewBox="0 0 24 24" fill="none" stroke="#4b5563" stroke-width="1.9" stroke-linecap="round" stroke-linejoin="round"><circle cx="12" cy="12" r="10"/><path d="M12 16v-4"/><path d="M12 8h.01"/></svg>
<svg class="b" style="left:1507.1px;top:600px;" width="308.8000000000002" height="220" viewBox="1507.1 600 308.8000000000002 220"><path d="M1512.10 606.6V812.7H1808.90" fill="none" stroke="#9a9a9a" stroke-width="1.7"/><rect x="1512.10" y="612.2" width="14.60" height="40.7" fill="#5cc5ff"/><rect x="1512.10" y="663.8" width="14.40" height="40.7" fill="#5cc5ff"/><rect x="1512.10" y="715.0" width="7.70" height="40.7" fill="#5cc5ff"/><rect x="1512.10" y="766.8" width="4.10" height="40.7" fill="#5cc5ff"/></svg>
<span class="t" style="left:1433.50px;top:627px;font-size:12.5px;line-height:12.5px;color:#1b7fe6;letter-spacing:-0.527px;">DLM-TEST-...</span>
<span class="t" style="left:1433.50px;top:678px;font-size:12.5px;line-height:12.5px;color:#1b7fe6;letter-spacing:-0.527px;">DLM-TEST-...</span>
<span class="t" style="left:1433.50px;top:730px;font-size:12.5px;line-height:12.5px;color:#1b7fe6;letter-spacing:-0.527px;">DLM-TEST-...</span>
<span class="t" style="left:1433.50px;top:781px;font-size:12.5px;line-height:12.5px;color:#1b7fe6;letter-spacing:-0.527px;">DLM-TEST-...</span>
<span class="t" style="left:1502.50px;top:819px;font-size:13px;line-height:13px;color:#666a72;letter-spacing:0.211px;">0%</span>
<span class="t" style="left:1647.15px;top:819px;font-size:13px;line-height:13px;color:#666a72;letter-spacing:0.240px;">50%</span>
<span class="t" style="left:1792.00px;top:819px;font-size:13px;line-height:13px;color:#666a72;letter-spacing:-0.016px;">100%</span>
<div class="b" style="left:485px;top:878px;width:690px;height:420px;background:#fff;border:1px solid #dfe5f2;border-radius:8px;"></div>
<span class="t" style="left:501.80px;top:898px;font-size:21px;line-height:21px;color:#111827;letter-spacing:-0.459px;">Sessions</span>
<span class="t" style="left:593.50px;top:906px;font-size:13px;line-height:13px;color:#627084;letter-spacing:-0.210px;">Last 30 days</span>
<span class="t" style="left:1060.50px;top:906px;font-size:13px;line-height:13px;color:#627084;letter-spacing:-0.170px;">Includes subsites</span>
<svg class="b" style="left:558.1px;top:960px;" width="577.9" height="220" viewBox="558.1 960 577.9 220"><path d="M562.1 975.00H1129.8" stroke="#d2d2d2" stroke-width="1.5" stroke-dasharray="3 3" fill="none"/><path d="M562.1 1072.90H1129.8" stroke="#d2d2d2" stroke-width="1.5" stroke-dasharray="3 3" fill="none"/><path d="M562.1 1170.8H1132" stroke="#969696" stroke-width="1.9" fill="none"/><rect x="599.76" y="1167.54" width="4.1" height="4.06" fill="#69d843"/><rect x="605.76" y="1141.43" width="4.1" height="30.17" fill="#ff9bf5"/><rect x="611.76" y="1138.17" width="4.1" height="33.43" fill="#5cc5ff"/><rect x="624.14" y="1141.43" width="4.1" height="30.17" fill="#ff9bf5"/><rect x="630.14" y="1141.43" width="4.1" height="30.17" fill="#5cc5ff"/><rect x="642.53" y="1167.54" width="4.1" height="4.06" fill="#ff9bf5"/><rect x="648.53" y="1167.54" width="4.1" height="4.06" fill="#5cc5ff"/><rect x="728.45" y="1164.27" width="4.1" height="7.33" fill="#69d843"/><rect x="734.45" y="1151.22" width="4.1" height="20.38" fill="#ff9bf5"/><rect x="740.45" y="1144.69" width="4.1" height="26.91" fill="#5cc5ff"/><rect x="752.83" y="1141.43" width="4.1" height="30.17" fill="#ff9bf5"/><rect x="758.83" y="1141.43" width="4.1" height="30.17" fill="#5cc5ff"/><rect x="771.21" y="1161.01" width="4.1" height="10.59" fill="#ff9bf5"/><rect x="777.21" y="1161.01" width="4.1" height="10.59" fill="#5cc5ff"/><rect x="789.60" y="1157.75" width="4.1" height="13.85" fill="#ff9bf5"/><rect x="795.60" y="1157.75" width="4.1" height="13.85" fill="#5cc5ff"/><rect x="844.75" y="1128.38" width="4.1" height="43.22" fill="#ff9bf5"/><rect x="850.75" y="1128.38" width="4.1" height="43.22" fill="#5cc5ff"/><rect x="863.13" y="1121.85" width="4.1" height="49.75" fill="#ff9bf5"/><rect x="869.13" y="1121.85" width="4.1" height="49.75" fill="#5cc5ff"/><rect x="881.52" y="994.58" width="4.1" height="177.02" fill="#ff9bf5"/><rect x="887.52" y="994.58" width="4.1" height="177.02" fill="#5cc5ff"/><rect x="899.90" y="1141.43" width="4.1" height="30.17" fill="#ff9bf5"/><rect x="905.90" y="1141.43" width="4.1" height="30.17" fill="#5cc5ff"/><rect x="918.29" y="1161.01" width="4.1" height="10.59" fill="#ff9bf5"/><rect x="924.29" y="1161.01" width="4.1" height="10.59" fill="#5cc5ff"/><rect x="973.44" y="1167.54" width="4.1" height="4.06" fill="#ff9bf5"/><rect x="979.44" y="1167.54" width="4.1" height="4.06" fill="#5cc5ff"/><rect x="1028.59" y="1151.22" width="4.1" height="20.38" fill="#ff9bf5"/><rect x="1034.59" y="1151.22" width="4.1" height="20.38" fill="#5cc5ff"/><rect x="1046.97" y="1017.42" width="4.1" height="154.18" fill="#ff9bf5"/><rect x="1052.97" y="1017.42" width="4.1" height="154.18" fill="#5cc5ff"/><rect x="1065.36" y="1030.48" width="4.1" height="141.12" fill="#ff9bf5"/><rect x="1071.36" y="1030.48" width="4.1" height="141.12" fill="#5cc5ff"/><rect x="1083.74" y="1157.75" width="4.1" height="13.85" fill="#ff9bf5"/><rect x="1089.74" y="1157.75" width="4.1" height="13.85" fill="#5cc5ff"/><rect x="1102.12" y="1069.64" width="4.1" height="101.96" fill="#ff9bf5"/><rect x="1108.12" y="1069.64" width="4.1" height="101.96" fill="#5cc5ff"/></svg>
<span class="t" style="left:538.10px;top:968px;font-size:13px;line-height:13px;color:#666a72;letter-spacing:1.040px;">60</span>
<span class="t" style="left:538.10px;top:1066px;font-size:13px;line-height:13px;color:#666a72;letter-spacing:1.040px;">30</span>
<span class="t" style="left:546.37px;top:1164px;font-size:13px;line-height:13px;color:#666a72;">0</span>
<span class="t" style="left:555.04px;top:1177px;font-size:13px;line-height:13px;color:#666a72;letter-spacing:-0.008px;">31/08</span>
<span class="t" style="left:608.99px;top:1177px;font-size:13px;line-height:13px;color:#666a72;letter-spacing:0.592px;">03/09</span>
<span class="t" style="left:664.00px;top:1177px;font-size:13px;line-height:13px;color:#666a72;letter-spacing:0.667px;">06/09</span>
<span class="t" style="left:719.10px;top:1177px;font-size:13px;line-height:13px;color:#666a72;letter-spacing:0.692px;">09/09</span>
<span class="t" style="left:775.65px;top:1177px;font-size:13px;line-height:13px;color:#666a72;letter-spacing:-0.008px;">12/09</span>
<span class="t" style="left:830.65px;top:1177px;font-size:13px;line-height:13px;color:#666a72;letter-spacing:0.067px;">15/09</span>
<span class="t" style="left:885.60px;top:1177px;font-size:13px;line-height:13px;color:#666a72;letter-spacing:0.167px;">18/09</span>
<span class="t" style="left:941.10px;top:1177px;font-size:13px;line-height:13px;color:#666a72;letter-spacing:-0.008px;">21/09</span>
<span class="t" style="left:995.00px;top:1177px;font-size:13px;line-height:13px;color:#666a72;letter-spacing:0.617px;">24/09</span>
<span class="t" style="left:1050.41px;top:1177px;font-size:13px;line-height:13px;color:#666a72;letter-spacing:0.492px;">27/09</span>
<span class="t" style="left:1105.21px;top:1177px;font-size:13px;line-height:13px;color:#666a72;letter-spacing:0.667px;">30/09</span>
<div class="b" style="left:715px;top:1211px;width:75px;height:32px;background:#fff;border:1px solid #dde3ef;border-radius:6px;"></div>
<div class="b" style="left:724px;top:1222.8px;width:8px;height:8px;background:#69d843;border-radius:4px;"></div>
<span class="t" style="left:736.00px;top:1220px;font-size:13px;line-height:13px;color:#111827;letter-spacing:-0.393px;-webkit-text-stroke:0.15px #111827;">Express</span>
<div class="b" style="left:806px;top:1211px;width:74px;height:32px;background:#fff;border:1px solid #dde3ef;border-radius:6px;"></div>
<div class="b" style="left:815px;top:1222.8px;width:8px;height:8px;background:#ff9bf5;border-radius:4px;"></div>
<span class="t" style="left:827.40px;top:1220px;font-size:13px;line-height:13px;color:#111827;letter-spacing:-0.404px;-webkit-text-stroke:0.15px #111827;">Regular</span>
<div class="b" style="left:896px;top:1211px;width:58px;height:32px;background:#fff;border:1px solid #dde3ef;border-radius:6px;"></div>
<div class="b" style="left:905px;top:1222.8px;width:8px;height:8px;background:#5cc5ff;border-radius:4px;"></div>
<span class="t" style="left:917.40px;top:1220px;font-size:13px;line-height:13px;color:#111827;letter-spacing:-0.065px;-webkit-text-stroke:0.15px #111827;">Total</span>
<div class="b" style="left:1183px;top:878px;width:690px;height:420px;background:#fff;border:1px solid #dfe5f2;border-radius:8px;"></div>
<span class="t" style="left:1199.80px;top:898px;font-size:21px;line-height:21px;color:#111827;letter-spacing:0.087px;">Consumption</span>
<span class="t" style="left:1333.30px;top:906px;font-size:13px;line-height:13px;color:#627084;letter-spacing:-0.192px;">Last 30 days</span>
<span class="t" style="left:1758.30px;top:906px;font-size:13px;line-height:13px;color:#627084;letter-spacing:-0.170px;">Includes subsites</span>
<svg class="b" style="left:1292.8px;top:960px;" width="541.2" height="220" viewBox="1292.8 960 541.2 220"><path d="M1296.8 975.00H1828.6" stroke="#d2d2d2" stroke-width="1.5" stroke-dasharray="3 3" fill="none"/><path d="M1296.8 1072.90H1828.6" stroke="#d2d2d2" stroke-width="1.5" stroke-dasharray="3 3" fill="none"/><path d="M1296.8 1170.8H1830" stroke="#969696" stroke-width="1.9" fill="none"/><rect x="1337.02" y="999.89" width="3.15" height="171.71" fill="#ff9bf5"/><rect x="1341.87" y="999.89" width="3.15" height="171.71" fill="#5cc5ff"/><rect x="1354.22" y="1086.33" width="3.15" height="85.27" fill="#ff9bf5"/><rect x="1359.07" y="1086.33" width="3.15" height="85.27" fill="#5cc5ff"/><rect x="1457.42" y="1166.04" width="3.15" height="5.56" fill="#ff9bf5"/><rect x="1462.27" y="1166.04" width="3.15" height="5.56" fill="#5cc5ff"/><rect x="1474.62" y="1166.32" width="3.15" height="5.28" fill="#ff9bf5"/><rect x="1479.47" y="1166.32" width="3.15" height="5.28" fill="#5cc5ff"/><rect x="1491.82" y="1170.52" width="3.15" height="1.08" fill="#ff9bf5"/><rect x="1496.67" y="1170.52" width="3.15" height="1.08" fill="#5cc5ff"/><rect x="1509.02" y="1163.25" width="3.15" height="8.35" fill="#ff9bf5"/><rect x="1513.87" y="1163.25" width="3.15" height="8.35" fill="#5cc5ff"/><rect x="1560.62" y="1129.12" width="3.15" height="42.48" fill="#ff9bf5"/><rect x="1565.47" y="1129.12" width="3.15" height="42.48" fill="#5cc5ff"/><rect x="1577.82" y="1133.32" width="3.15" height="38.28" fill="#ff9bf5"/><rect x="1582.67" y="1133.32" width="3.15" height="38.28" fill="#5cc5ff"/><rect x="1595.02" y="1110.94" width="3.15" height="60.66" fill="#ff9bf5"/><rect x="1599.87" y="1110.94" width="3.15" height="60.66" fill="#5cc5ff"/><rect x="1612.22" y="1110.38" width="3.15" height="61.22" fill="#ff9bf5"/><rect x="1617.07" y="1110.38" width="3.15" height="61.22" fill="#5cc5ff"/><rect x="1629.42" y="1135.00" width="3.15" height="36.60" fill="#ff9bf5"/><rect x="1634.27" y="1135.00" width="3.15" height="36.60" fill="#5cc5ff"/><rect x="1681.02" y="1143.11" width="3.15" height="28.49" fill="#ff9bf5"/><rect x="1685.87" y="1143.11" width="3.15" height="28.49" fill="#5cc5ff"/><rect x="1732.62" y="1162.97" width="3.15" height="8.63" fill="#ff9bf5"/><rect x="1737.47" y="1162.97" width="3.15" height="8.63" fill="#5cc5ff"/><rect x="1749.82" y="1119.61" width="3.15" height="51.99" fill="#ff9bf5"/><rect x="1754.67" y="1119.61" width="3.15" height="51.99" fill="#5cc5ff"/><rect x="1767.02" y="1165.21" width="3.15" height="6.39" fill="#ff9bf5"/><rect x="1771.87" y="1165.21" width="3.15" height="6.39" fill="#5cc5ff"/><rect x="1784.22" y="1170.52" width="3.15" height="1.08" fill="#ff9bf5"/><rect x="1789.07" y="1170.52" width="3.15" height="1.08" fill="#5cc5ff"/><rect x="1801.42" y="1131.08" width="3.15" height="40.52" fill="#ff9bf5"/><rect x="1806.27" y="1131.08" width="3.15" height="40.52" fill="#5cc5ff"/></svg>
<span class="t" style="left:1237.00px;top:968px;font-size:13px;line-height:13px;color:#666a72;letter-spacing:0.116px;">700 kWh</span>
<span class="t" style="left:1237.00px;top:1066px;font-size:13px;line-height:13px;color:#666a72;letter-spacing:0.116px;">350 kWh</span>
<span class="t" style="left:1252.50px;top:1164px;font-size:13px;line-height:13px;color:#666a72;letter-spacing:-0.085px;">0 kWh</span>
<span class="t" style="left:1289.15px;top:1177px;font-size:13px;line-height:13px;color:#666a72;letter-spacing:-0.008px;">31/08</span>
<span class="t" style="left:1339.55px;top:1177px;font-size:13px;line-height:13px;color:#666a72;letter-spacing:0.592px;">03/09</span>
<span class="t" style="left:1391.00px;top:1177px;font-size:13px;line-height:13px;color:#666a72;letter-spacing:0.667px;">06/09</span>
<span class="t" style="left:1442.55px;top:1177px;font-size:13px;line-height:13px;color:#666a72;letter-spacing:0.692px;">09/09</span>
<span class="t" style="left:1495.55px;top:1177px;font-size:13px;line-height:13px;color:#666a72;letter-spacing:-0.008px;">12/09</span>
<span class="t" style="left:1547.00px;top:1177px;font-size:13px;line-height:13px;color:#666a72;letter-spacing:0.067px;">15/09</span>
<span class="t" style="left:1598.40px;top:1177px;font-size:13px;line-height:13px;color:#666a72;letter-spacing:0.167px;">18/09</span>
<span class="t" style="left:1650.35px;top:1177px;font-size:13px;line-height:13px;color:#666a72;letter-spacing:-0.008px;">21/09</span>
<span class="t" style="left:1700.70px;top:1177px;font-size:13px;line-height:13px;color:#666a72;letter-spacing:0.617px;">24/09</span>
<span class="t" style="left:1752.55px;top:1177px;font-size:13px;line-height:13px;color:#666a72;letter-spacing:0.492px;">27/09</span>
<span class="t" style="left:1803.80px;top:1177px;font-size:13px;line-height:13px;color:#666a72;letter-spacing:0.667px;">30/09</span>
<div class="b" style="left:1413px;top:1211px;width:75px;height:32px;background:#fff;border:1px solid #dde3ef;border-radius:6px;"></div>
<div class="b" style="left:1422px;top:1222.8px;width:8px;height:8px;background:#69d843;border-radius:4px;"></div>
<span class="t" style="left:1434.00px;top:1220px;font-size:13px;line-height:13px;color:#111827;letter-spacing:-0.360px;-webkit-text-stroke:0.15px #111827;">Express</span>
<div class="b" style="left:1504px;top:1211px;width:74px;height:32px;background:#fff;border:1px solid #dde3ef;border-radius:6px;"></div>
<div class="b" style="left:1513px;top:1222.8px;width:8px;height:8px;background:#ff9bf5;border-radius:4px;"></div>
<span class="t" style="left:1525.40px;top:1220px;font-size:13px;line-height:13px;color:#111827;letter-spacing:-0.404px;-webkit-text-stroke:0.15px #111827;">Regular</span>
<div class="b" style="left:1594px;top:1211px;width:58px;height:32px;background:#fff;border:1px solid #dde3ef;border-radius:6px;"></div>
<div class="b" style="left:1603px;top:1222.8px;width:8px;height:8px;background:#5cc5ff;border-radius:4px;"></div>
<span class="t" style="left:1615.40px;top:1220px;font-size:13px;line-height:13px;color:#111827;letter-spacing:-0.065px;-webkit-text-stroke:0.15px #111827;">Total</span>
</body></html>
